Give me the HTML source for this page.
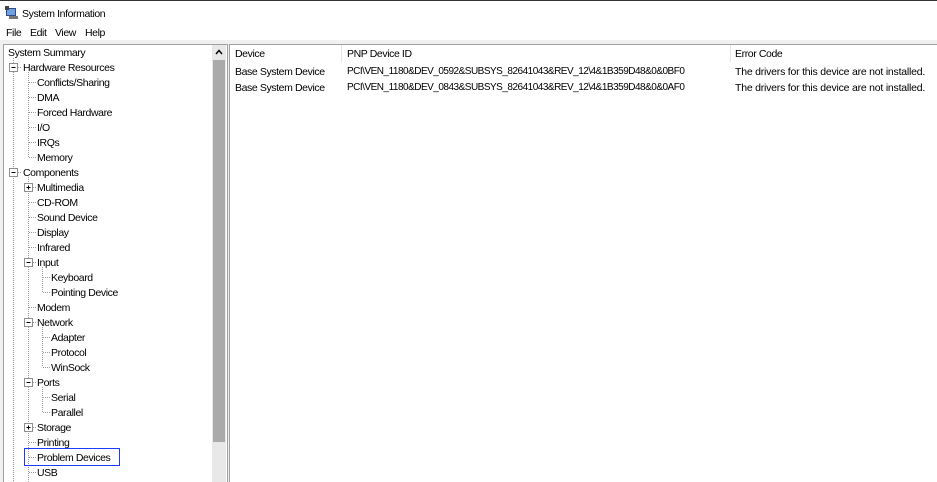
<!DOCTYPE html>
<html><head><meta charset="utf-8"><style>
*{margin:0;padding:0;box-sizing:border-box}
body{width:937px;height:482px;overflow:hidden;background:#f0f0f0;font-family:"Liberation Sans",sans-serif;font-size:10.5px;letter-spacing:-0.4px;color:#000;position:relative}
.a{position:absolute;white-space:nowrap;line-height:14px;height:14px}
#title{position:absolute;left:0;top:0;width:937px;height:24px;background:#fff;border-top:1px solid #333}
#menu{position:absolute;left:0;top:24px;width:937px;height:16px;background:#fff}
#left{position:absolute;left:3px;top:44px;width:225px;height:438px;background:#fff;border:1px solid #a0a0a0;border-bottom:none}
#right{position:absolute;left:229px;top:44px;width:708px;height:438px;background:#fff;border:1px solid #a0a0a0;border-bottom:none;border-right:none}
.t{position:absolute;white-space:nowrap;line-height:14px;height:14px}
.p{font-size:10px;letter-spacing:-0.5px}
.e{letter-spacing:-0.22px}
</style></head><body>
<div id="title">
<svg style="position:absolute;left:5px;top:5px" width="14" height="14" viewBox="0 0 14 14"><rect x="1" y="2" width="10" height="8" fill="#2a4a8a"/><rect x="2" y="3" width="8" height="6" fill="#6fa0e0"/><rect x="4" y="10" width="9" height="3" fill="#777"/><rect x="0" y="0" width="4" height="4" fill="#444"/></svg>
<div class="a" style="left:22px;top:6px">System Information</div>
</div>
<div id="menu">
<div class="a" style="left:6px;top:2px">File</div>
<div class="a" style="left:30px;top:2px">Edit</div>
<div class="a" style="left:55px;top:2px">View</div>
<div class="a" style="left:85px;top:2px">Help</div>
</div>
<div id="left"></div>
<div id="right"></div>
<div style="position:absolute;left:212px;top:45px;width:14px;height:437px;background:#e8e8e8"></div>
<div style="position:absolute;left:213px;top:60px;width:12px;height:382px;background:#a9aaa9"></div>
<svg style="position:absolute;left:212px;top:45px" width="14" height="14"><path d="M4 9 L7 5.5 L10 9" fill="none" stroke="#000" stroke-width="1.4"/></svg>
<svg style="position:absolute;left:0;top:0" width="230" height="482">
<g stroke="#9a9a9a" stroke-width="1" stroke-dasharray="1,1" fill="none">
<path d="M13.5 58 V482"/>
<path d="M28.5 72 V157 M28.5 177 V482"/>
<path d="M42.5 267 V292 M42.5 327 V367 M42.5 387 V412"/>
<path d="M18 67.5 H22 M18 172.5 H22"/>
<path d="M29 82.5H36M29 97.5H36M29 112.5H36M29 127.5H36M29 142.5H36M29 157.5H36"/>
<path d="M33 187.5H36M29 202.5H36M29 217.5H36M29 232.5H36M29 247.5H36M33 262.5H36M29 307.5H36M33 322.5H36M33 382.5H36M33 427.5H36M29 442.5H36M29 457.5H36M29 472.5H36"/>
<path d="M43 277.5H50M43 292.5H50M43 337.5H50M43 352.5H50M43 367.5H50M43 397.5H50M43 412.5H50"/>
</g>
<g fill="#fff" stroke="#8f8f8f">
<rect x="9.5" y="63.5" width="8" height="8"/><rect x="9.5" y="168.5" width="8" height="8"/>
<rect x="24.5" y="183.5" width="8" height="8"/><rect x="24.5" y="258.5" width="8" height="8"/>
<rect x="24.5" y="318.5" width="8" height="8"/><rect x="24.5" y="378.5" width="8" height="8"/>
<rect x="24.5" y="423.5" width="8" height="8"/>
</g>
<g stroke="#000">
<path d="M11.5 67.5H15.5M11.5 172.5H15.5M26.5 187.5H30.5M28.5 185.5V189.5M26.5 262.5H30.5M26.5 322.5H30.5M26.5 382.5H30.5M26.5 427.5H30.5M28.5 425.5V429.5"/>
</g>
</svg>
<div class="t" style="left:8px;top:46px">System Summary</div>
<div class="t" style="left:23px;top:61px">Hardware Resources</div>
<div class="t" style="left:37px;top:76px">Conflicts/Sharing</div>
<div class="t" style="left:37px;top:91px">DMA</div>
<div class="t" style="left:37px;top:106px">Forced Hardware</div>
<div class="t" style="left:37px;top:121px">I/O</div>
<div class="t" style="left:37px;top:136px">IRQs</div>
<div class="t" style="left:37px;top:151px">Memory</div>
<div class="t" style="left:23px;top:166px">Components</div>
<div class="t" style="left:37px;top:181px">Multimedia</div>
<div class="t" style="left:37px;top:196px">CD-ROM</div>
<div class="t" style="left:37px;top:211px">Sound Device</div>
<div class="t" style="left:37px;top:226px">Display</div>
<div class="t" style="left:37px;top:241px">Infrared</div>
<div class="t" style="left:37px;top:256px">Input</div>
<div class="t" style="left:51px;top:271px">Keyboard</div>
<div class="t" style="left:51px;top:286px">Pointing Device</div>
<div class="t" style="left:37px;top:301px">Modem</div>
<div class="t" style="left:37px;top:316px">Network</div>
<div class="t" style="left:51px;top:331px">Adapter</div>
<div class="t" style="left:51px;top:346px">Protocol</div>
<div class="t" style="left:51px;top:361px">WinSock</div>
<div class="t" style="left:37px;top:376px">Ports</div>
<div class="t" style="left:51px;top:391px">Serial</div>
<div class="t" style="left:51px;top:406px">Parallel</div>
<div class="t" style="left:37px;top:421px">Storage</div>
<div class="t" style="left:37px;top:436px">Printing</div>
<div style="position:absolute;left:24px;top:448px;width:96px;height:18px;border:1px solid #1a3cff"></div>
<div class="t" style="left:37px;top:451px">Problem Devices</div>
<div class="t" style="left:37px;top:466px">USB</div>
<div style="position:absolute;left:341px;top:45px;width:1px;height:17px;background:#e5e5e5"></div>
<div style="position:absolute;left:730px;top:45px;width:1px;height:17px;background:#e5e5e5"></div>
<div class="t" style="left:235px;top:47px">Device</div>
<div class="t" style="left:347px;top:47px">PNP Device ID</div>
<div class="t" style="left:735px;top:47px">Error Code</div>
<div class="t" style="left:235px;top:65px">Base System Device</div>
<div class="t p" style="left:347px;top:65px">PCI\VEN_1180&amp;DEV_0592&amp;SUBSYS_82641043&amp;REV_12\4&amp;1B359D48&amp;0&amp;0BF0</div>
<div class="t e" style="left:735px;top:65px">The drivers for this device are not installed.</div>
<div class="t" style="left:235px;top:81px">Base System Device</div>
<div class="t p" style="left:347px;top:81px">PCI\VEN_1180&amp;DEV_0843&amp;SUBSYS_82641043&amp;REV_12\4&amp;1B359D48&amp;0&amp;0AF0</div>
<div class="t e" style="left:735px;top:81px">The drivers for this device are not installed.</div>
</body></html>
